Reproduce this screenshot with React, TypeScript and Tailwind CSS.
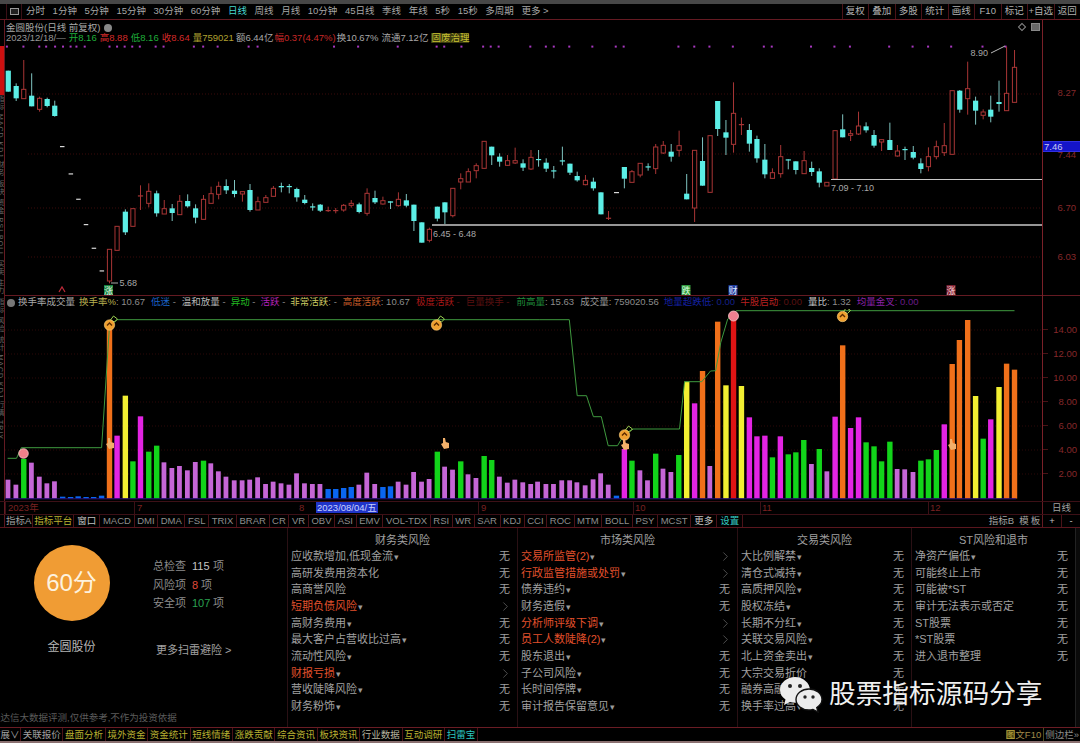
import React from "react";
import { ChevronRight } from "lucide-react";

const SX = 2.904;
type C = [number, number, number, number, number, "c" | "r"];
const candlesL: C[] = [
  [24,32,32,95,95,"c"],[47,70,78,115,123,"c"],[69,0,88,116,116,"r"],[92,40,107,139,139,"c"],[115,110,115,148,155,"r"],[137,113,117,138,142,"c"],[159,122,137,168,170,"c"],
  [318,568,568,663,670,"r"],[340,499,499,571,571,"r"],[364,448,455,517,525,"c"],[386,446,446,499,499,"r"],[408,376,406,408,450,"r"],[432,370,394,430,442,"r"],[455,392,400,460,470,"c"],[477,420,446,462,462,"r"],[500,432,445,459,483,"c"],[522,405,424,464,464,"r"],[545,403,423,439,443,"c"],[568,433,445,473,490,"c"],[591,405,418,478,478,"r"],[613,380,401,430,430,"r"],[635,365,379,403,418,"r"],[657,358,378,391,402,"c"],[681,360,392,402,412,"c"],[704,395,395,402,425,"r"],[726,372,390,450,455,"c"],[749,410,425,450,450,"r"],[772,405,413,427,427,"r"],[794,378,385,409,409,"r"],[817,368,378,382,397,"c"],[840,372,378,381,400,"c"],[862,383,387,412,425,"c"],[885,405,419,429,433,"c"],[908,430,439,441,452,"c"],[930,432,434,452,456,"c"],[953,440,450,452,456,"r"],[975,444,450,452,460,"r"],[998,432,436,450,455,"r"],[1020,420,430,436,443,"r"],[1043,428,433,456,460,"c"],[1066,385,400,460,467,"r"],[1089,392,414,427,432,"c"],[1112,410,422,432,434,"r"],[1134,424,424,428,447,"c"],[1157,397,418,437,440,"r"],[1180,402,421,437,442,"c"],[1202,434,434,483,513,"c"],[1225,487,487,548,548,"c"],[1247,503,508,541,547,"r"],[1270,440,440,476,484,"c"],[1292,427,427,457,492,"c"],[1315,385,385,467,472,"r"],[1338,340,356,366,388,"r"],[1360,325,335,366,366,"r"],[1383,310,317,332,355,"r"],[1406,244,244,325,325,"r"],[1428,260,260,286,315,"c"],[1451,280,290,305,320,"c"],[1474,285,302,316,318,"r"],[1496,263,302,309,312,"r"],[1519,298,310,323,333,"c"],[1542,270,292,327,330,"r"],[1564,270,297,299,320,"c"],
];
const candlesR: C[] = [
  [18,355,368,386,396,"c"],[40,378,391,393,415,"c"],[65,320,361,363,376,"c"],[87,371,371,398,405,"c"],[108,395,408,421,425,"c"],[132,405,421,434,436,"r"],[155,413,425,445,452,"c"],[177,457,457,523,523,"c"],[199,513,533,537,540,"r"],
  [245,381,381,416,445,"c"],[267,390,395,427,427,"r"],[291,370,370,405,412,"r"],[314,370,379,381,392,"c"],[336,312,321,386,402,"r"],[358,303,316,339,342,"r"],[381,312,335,350,365,"c"],[404,272,317,331,350,"r"],[426,402,461,478,478,"c"],[449,331,331,504,546,"r"],[472,292,363,437,437,"c"],[494,287,287,457,457,"r"],[516,183,183,267,288,"c"],[540,240,277,293,345,"c"],[562,127,220,313,338,"r"],[585,233,252,254,285,"r"],[608,252,270,311,335,"c"],[630,287,297,355,368,"c"],[653,312,359,403,415,"c"],[675,385,398,415,415,"r"],[699,315,350,401,413,"r"],[721,358,358,361,388,"c"],[743,364,364,390,403,"c"],[767,333,362,401,401,"r"],[789,365,384,396,408,"c"],[811,385,394,428,442,"c"],[833,427,427,438,438,"r"],[857,272,272,417,417,"r"],[879,223,268,292,292,"c"],[902,270,281,286,303,"r"],[925,215,258,282,285,"r"],[947,247,259,271,278,"c"],[970,270,285,317,323,"c"],[992,299,299,306,333,"r"],[1016,248,300,330,330,"c"],[1038,315,333,348,350,"r"],[1060,320,327,329,360,"c"],[1084,318,336,353,358,"c"],[1106,355,370,387,400,"c"],[1128,322,350,380,394,"r"],[1151,302,320,350,358,"r"],[1174,249,317,338,348,"r"],[1197,152,152,343,343,"r"],[1219,150,152,209,218,"c"],[1242,65,146,176,224,"r"],[1265,170,182,212,254,"c"],[1287,208,216,226,238,"r"],[1309,167,209,230,247,"c"],[1333,122,186,192,215,"c"],[1355,20,160,212,212,"r"],[1378,30,82,187,187,"r"],
];
const CY = "#5ceee6";
const RD = "#a83535";

function Candle({ c, ox, oy }: { c: C; ox: number; oy: number }) {
  const x = ox + c[0] / SX;
  const y = (v: number) => oy + v / 3;
  const col = c[5] === "c" ? CY : RD;
  const w = 5.2;
  const thin = c[3] - c[2] < 5;
  return (
    <g>
      <line x1={x} x2={x} y1={y(c[1])} y2={y(c[4])} stroke={c[5] === "c" ? "#7fc4c0" : RD} strokeWidth={1} />
      {c[5] === "c" ? (
        <rect x={x - w / 2} y={y(c[2])} width={w} height={Math.max(1.2, (c[3] - c[2]) / 3)} fill={col} />
      ) : thin ? (
        <rect x={x - w / 2} y={y(c[2])} width={w} height={1.2} fill={col} />
      ) : (
        <rect x={x - w / 2 + 0.5} y={y(c[2])} width={w - 1} height={(c[3] - c[2]) / 3} fill="#000" stroke={col} strokeWidth={1} />
      )}
    </g>
  );
}

const dotsL = [20,68,114,134,160,183,205,222,246,318,340,362,384,406,452,475,563,590,632,722,748,970,1040,1155,1268,1290,1340,1403,1425,1448,1540];
const dotsR = [17,40,85,152,220,243,402,448,492,560,650,673,787,855,900,1014,1082,1127,1194,1285,1352];
const dashes: [number, number][] = [[180,258],[205,340],[227,416],[249,492],[272,563],[295,631]];

const P = "#c566d6", G = "#12d41a", O = "#f0701a", Y = "#f2ef32", M = "#e324e3", B = "#0a66f0", R = "#e01414";
const barsL: [number, number, string][] = [
  [24,512,P],[47,527,P],[69,450,G],[92,461,P],[115,503,P],[137,523,P],[159,517,P],[182,563,B],[205,564,B],[227,562,B],[250,564,B],[272,564,B],[295,560,B],[318,50,O],[340,380,M],[364,260,Y],[386,457,G],[408,322,M],[432,428,G],[455,410,G],[477,460,P],[500,477,P],[522,471,P],[545,484,P],[568,459,P],[591,455,G],[613,463,P],[635,487,P],[657,503,P],[681,514,P],[704,514,P],[726,512,P],[749,505,P],[772,525,P],[794,518,P],[817,523,P],[840,527,P],[862,493,P],[885,523,P],[908,525,P],[930,525,P],[953,540,B],[975,540,B],[998,537,B],[1020,534,B],[1043,527,P],[1066,491,P],[1089,525,P],[1112,534,B],[1134,532,B],[1157,518,P],[1180,527,P],[1202,489,P],[1225,518,P],[1247,510,P],[1270,428,G],[1292,473,P],[1315,482,P],[1338,457,G],[1360,496,P],[1383,507,P],[1406,441,G],[1428,453,G],[1451,503,P],[1474,521,P],[1496,512,P],[1519,520,P],[1542,525,P],[1562,518,P],
];
const barsR: [number, number, string][] = [
  [18,525,P],[40,525,P],[64,514,P],[87,514,P],[108,520,P],[132,529,P],[155,511,P],[177,493,P],[199,527,P],[222,560,B],[245,420,M],[267,455,G],[291,484,P],[313,514,P],[336,434,G],[358,479,P],[381,489,P],[403,438,G],[426,218,Y],[449,283,M],[472,186,O],[494,471,P],[516,38,O],[540,229,Y],[562,30,R],[585,231,Y],[608,325,M],[630,382,M],[653,380,M],[675,445,G],[698,382,M],[721,436,G],[743,430,G],[766,393,G],[789,465,P],[811,420,G],[834,487,P],[857,323,M],[879,109,O],[902,357,M],[925,325,M],[947,400,G],[970,412,G],[992,457,G],[1016,398,G],[1038,480,P],[1060,481,P],[1084,489,P],[1106,455,G],[1128,451,G],[1151,423,G],[1174,346,M],[1197,165,O],[1218,93,O],[1242,33,O],[1265,261,Y],[1287,389,G],[1309,331,M],[1333,234,Y],[1355,164,O],[1378,182,O],
];
const lineL = [[22,448],[48,448],[62,416],[295,416],[318,50],[340,32],[1568,32]];
const lineR = [[0,32],[85,32],[108,260],[135,260],[155,323],[178,323],[198,410],[225,410],[245,375],[270,360],[405,360],[420,218],[470,218],[495,186],[510,185],[525,100],[545,30],[570,5],[1378,5]];
const volPts = [
  ...lineL.map(([x, y]) => `${(x / SX).toFixed(1)},${(310 + y / 3).toFixed(1)}`),
  ...lineR.map(([x, y]) => `${(540 + x / SX).toFixed(1)},${(310 + y / 3).toFixed(1)}`),
].join(" ");

function Smile({ x, y }: { x: number; y: number }) {
  return (
    <g>
      <path d={`M${x + 1} ${y - 5} L${x + 4} ${y - 9} L${x + 8} ${y - 6} L${x + 5} ${y - 3} Z`} fill="none" stroke="#9ccf50" strokeWidth={1} />
      <circle cx={x} cy={y} r={5.2} fill="#f0a030" stroke="#f8d080" strokeWidth={0.6} />
      <path d={`M${x - 2.5} ${y + 0.5} L${x} ${y - 2} L${x + 2.5} ${y + 0.5}`} fill="none" stroke="#5a2a00" strokeWidth={1.4} />
    </g>
  );
}
function Hand({ x, y }: { x: number; y: number }) {
  return (
    <path
      d={`M${x - 2} ${y - 6} L${x} ${y - 6} L${x + 0.8} ${y - 2} L${x + 4} ${y - 1} L${x + 4} ${y + 4} L${x - 1} ${y + 5} L${x - 4} ${y} L${x - 2} ${y - 1} Z`}
      fill="#f2b06a"
    />
  );
}

function PriceChart() {
  return (
    <svg viewBox="5 43 1037 253" width={1037} height={253} className="block">
      {[94, 154, 208, 257].map((y) => (
        <line key={y} x1={28} x2={1042} y1={y} y2={y} stroke="#3a0a0a" strokeDasharray="1 2" />
      ))}
      {dotsL.map((d) => <rect key={d} x={d / SX - 1} y={45.6} width={2} height={2} fill="#a838c0" />)}
      {dotsR.map((d) => <rect key={d} x={540 + d / SX - 1} y={45.6} width={2} height={2} fill="#a838c0" />)}
      {dashes.map(([x, y]) => <rect key={x} x={x / SX - 2} y={60 + y / 3} width={4.5} height={1.2} fill="#d8d8d8" />)}
      <rect x={614} y={192} width={5} height={1.2} fill="#d8d8d8" />
      {candlesL.map((c, i) => <Candle key={i} c={c} ox={0} oy={60} />)}
      {candlesR.map((c, i) => <Candle key={i} c={c} ox={540} oy={40} />)}
      <line x1={432} x2={1042} y1={225} y2={225} stroke="#c8c8c8" strokeWidth={1.4} />
      <line x1={831} x2={1042} y1={179.5} y2={179.5} stroke="#c8c8c8" strokeWidth={1} />
      <line x1={111} x2={118} y1={283} y2={283} stroke="#aaa" />
      <line x1={991} x2={1005} y1={53} y2={46} stroke="#bbb" />
      <g fill="#a8a8a8" fontSize={9}>
        <text x={119.5} y={286}>5.68</text>
        <text x={433} y={236.5}>6.45 - 6.48</text>
        <text x={831} y={190.5}>7.09 - 7.10</text>
        <text x={970.5} y={55.5}>8.90</text>
      </g>
      <path d="M59 292 L62 287 L65 292" fill="none" stroke="#c02a3a" strokeWidth={1.2} />
      <rect x={104} y={285} width={9} height={10} fill="#12803a" />
      <text x={104} y={294} fontSize={9} fill="#e8f8e8">涨</text>
      <rect x={681.5} y={285} width={9} height={10} fill="#2f9a3f" />
      <text x={681.5} y={294} fontSize={9} fill="#dfffdf">跌</text>
      <rect x={728.5} y={285} width={9} height={10} fill="#1f3a9a" />
      <text x={728.5} y={294} fontSize={9} fill="#e0e8ff">财</text>
      <rect x={946.5} y={285} width={9} height={10} fill="#7a2030" />
      <text x={946.5} y={294} fontSize={9} fill="#ffd8d8">涨</text>
    </svg>
  );
}

function VolumeChart() {
  return (
    <svg viewBox="5 310 1037 191" width={1037} height={191} className="block">
      {[331, 355, 379, 403, 427, 451, 475].map((y) => (
        <line key={y} x1={5} x2={1042} y1={y} y2={y} stroke="#2c0808" strokeDasharray="1 2" />
      ))}
      {barsL.map(([x, t, c]) => (
        <rect key={x} x={x / SX - 2.7} y={310 + t / 3} width={c === P ? 4.8 : 5.4} height={499.5 - (310 + t / 3)} fill={c} />
      ))}
      {barsR.map(([x, t, c]) => (
        <rect key={x} x={540 + x / SX - 2.7} y={310 + t / 3} width={c === P ? 4.8 : 5.4} height={499.5 - (310 + t / 3)} fill={c} />
      ))}
      <line x1={5} x2={1016} y1={499.8} y2={499.8} stroke="#2a1080" />
      <polyline points={volPts} fill="none" stroke="#3f9a3f" strokeWidth={1} />
      <Smile x={109.5} y={326} />
      <Smile x={436.5} y={326} />
      <Smile x={624.5} y={436} />
      <Smile x={842.5} y={317.5} />
      <circle cx={23.5} cy={454.5} r={4.8} fill="#f0808a" stroke="#f8c8c8" strokeWidth={0.8} />
      <circle cx={733.5} cy={317} r={5} fill="#f08090" stroke="#f8c8c8" strokeWidth={0.8} />
      <Hand x={110} y={445} />
      <Hand x={445} y={445} />
      <Hand x={625} y={446} />
      <Hand x={952} y={446} />
    </svg>
  );
}

const timeTabs = ["分时","1分钟","5分钟","15分钟","30分钟","60分钟","日线","周线","月线","10分钟","45日线","季线","年线","5秒","15秒","多周期","更多 >"];
const rightTabs = ["复权","叠加","多股","统计","画线","F10","标记","+自选","返回"];

function Toolbar() {
  return (
    <div className="h-[16px] shrink-0 flex items-center border-b border-[#641a22] text-[9.5px] text-[#a6a6a6]">
      <div className="w-[7px] h-full border-r border-[#3a1016]" />
      <div className="w-[15px] h-full border-r border-[#3a1016] flex items-center justify-center">
        <div className="w-[9px] h-[7px] border border-[#999] bg-[#222]" />
      </div>
      <div className="flex items-center gap-[7.6px] pl-[4px] flex-1 whitespace-nowrap">
        {timeTabs.map((t) => (
          <span key={t} className={t === "日线" ? "text-[#46d8d0]" : ""}>{t}</span>
        ))}
      </div>
      <div className="flex h-full">
        {rightTabs.map((t) => (
          <div key={t} className="w-[26.5px] flex items-center justify-center border-l border-[#4a1218] whitespace-nowrap text-[#b0b0b0]">{t}</div>
        ))}
      </div>
    </div>
  );
}

function PriceHeader() {
  return (
    <div className="h-[23px] shrink-0 text-[9.5px] text-[#a8a8a8] pl-[1px] whitespace-nowrap relative leading-none">
      <div className="flex items-center gap-[4px] h-[13px] pt-[2px]">
        <span>金圆股份(日线 前复权)</span>
        <span className="w-[8px] h-[8px] rounded-full bg-[#888] inline-block" />
      </div>
      <div className="flex items-center h-[10px] gap-[1px]">
        <span className="text-[#979797]">2023/12/18/—</span>
        <span className="text-[#1fae3a] ml-[2px]">开8.16</span>
        <span className="text-[#d42a2a] ml-[2px]">高8.88</span>
        <span className="text-[#1fae3a] ml-[2px]">低8.16</span>
        <span className="text-[#d42a2a] ml-[2px]">收8.64</span>
        <span className="text-[#b0a030] ml-[2px]">量759021</span>
        <span className="text-[#a8a8a8] ml-[1px]">额6.44亿</span>
        <span className="text-[#c82828]">幅0.37(4.47%)</span>
        <span className="text-[#a8a8a8]">换10.67%</span>
        <span className="text-[#a8a8a8] ml-[2px]">流通7.12亿</span>
        <span className="text-[#c8c030] bg-[#3a3a10] ml-[2px]">固废治理</span>
      </div>
      <div className="absolute right-[2px] top-[3px] flex items-center gap-[6px]">
        <span className="w-[6px] h-[6px] rotate-45 border border-[#888]" />
        <span className="w-[9px] h-[8px] border border-[#888] bg-[#666]" />
      </div>
    </div>
  );
}

const volLegend: { t: string; c: string; v?: string; g: string }[] = [
  { t: "换手率%", c: "#b8b050", v: ": 10.67", g: "ml-[4px]" },
  { t: "低迷", c: "#1a62c8", v: " -", g: "ml-[6px]" },
  { t: "温和放量", c: "#b8b8b8", v: " -", g: "ml-[6px]" },
  { t: "异动", c: "#22b822", v: " -", g: "ml-[5px]" },
  { t: "活跃", c: "#b020b8", v: " -", g: "ml-[5px]" },
  { t: "非常活跃", c: "#c8c860", v: ": -", g: "ml-[5px]" },
  { t: "高度活跃", c: "#c05a28", v: ": 10.67", g: "ml-[6px]" },
  { t: "极度活跃", c: "#a81818", v: " -", g: "ml-[6px]" },
  { t: "巨量换手", c: "#5a1010", v: " -", g: "ml-[6px]" },
  { t: "前高量", c: "#1f8a3a", v: ": 15.63", g: "ml-[7px]" },
  { t: "成交量", c: "#9a9a9a", v: ": 759020.56", g: "ml-[6px]" },
  { t: "地量超跌低", c: "#1420a0", v: ": 0.00", g: "ml-[5px]" },
  { t: "牛股启动", c: "#b82020", v: ": 0.00", g: "ml-[5px]" },
  { t: "量比", c: "#c8c8c8", v: ": 1.32", g: "ml-[6px]" },
  { t: "均量金叉", c: "#8a20a8", v: ": 0.00", g: "ml-[6px]" },
];

function VolumeHeader() {
  return (
    <div className="h-[13px] shrink-0 flex items-center text-[9.5px] whitespace-nowrap pl-[2px] overflow-hidden">
      <span className="w-[8px] h-[8px] rounded-full bg-[#777] mr-[3px] shrink-0" />
      <span className="text-[#a8a8a8]">换手率成交量</span>
      {volLegend.map((l) => (
        <span key={l.t} className={l.g}>
          <span style={{ color: l.c }}>{l.t}</span>
          <span className={l.t === "牛股启动" || l.t === "极度活跃" || l.t === "巨量换手" ? "text-[#5a1010]" : l.t === "均量金叉" ? "text-[#6a1a88]" : l.t === "地量超跌低" ? "text-[#14208a]" : "text-[#8c8c8c]"}>{l.v}</span>
        </span>
      ))}
    </div>
  );
}

function LeftStrip() {
  return (
    <div className="w-[5px] shrink-0 border-r border-[#641a22] flex flex-col overflow-hidden">
      <div className="h-[26px] shrink-0" />
      <div className="h-[49px] shrink-0 bg-[#cc1010]" />
      <div className="flex-1 overflow-hidden text-[7px] text-[#666] [writing-mode:vertical-rl] whitespace-nowrap leading-none -ml-[2px] tracking-[1px]">
        指标 MACD KDJ 财务 板块 资金 RSI BOLL 买卖 主力 指标 风险 统计 MACD KDJ 行情 TRIX
      </div>
    </div>
  );
}

function PriceAxis() {
  return (
    <div className="relative h-[276px] border-b border-[#641a22] text-[9.5px] text-[#85282a]">
      {[["8.27", 73], ["7.44", 135], ["6.70", 188], ["6.03", 237]].map(([t, y]) => (
        <span key={t} className="absolute right-[4px] leading-none" style={{ top: Number(y) - 5 }}>{t}</span>
      ))}
      <div className="absolute left-0 right-0 top-[121px] h-[11px] bg-[#1414c8] border-y border-[#3030e0] text-[#c8c8f0] leading-[9px] pl-[1px]">7.46</div>
    </div>
  );
}

function VolAxis() {
  return (
    <div className="relative flex-1 text-[9.5px] text-[#85282a]">
      {[["14.00", 331], ["12.00", 355], ["10.00", 379], ["8.00", 403], ["6.00", 427], ["4.00", 451], ["2.00", 475]].map(([t, y]) => (
        <div key={t} className="absolute left-0 right-[3px] flex items-center justify-between leading-none" style={{ top: Number(y) - 297 - 5 }}>
          <span className="w-[5px] h-px bg-[#4a1216]" />
          <span>{t}</span>
        </div>
      ))}
    </div>
  );
}

function DateRow() {
  const ticks: [string, string, string][] = [
    ["2023年", "w-[129px]", "text-[#7a2222]"],
    ["7", "w-[164px]", "text-[#7a2222]"],
  ];
  return (
    <div className="h-[14px] shrink-0 flex border-y border-[#3c1016] text-[9.5px] leading-[12px] whitespace-nowrap">
      <div className="w-[5px] shrink-0 border-r border-[#641a22]" />
      <div className="w-[1037px] flex shrink-0">
        {ticks.map(([t, w, c]) => (
          <div key={t} className={`${w} ${c} pl-[2px] border-l border-[#3c1016]`}>{t}</div>
        ))}
        <div className="w-[18px] text-[#7a2222] pl-[1px]">8</div>
        <div className="w-[162px]">
          <span className="bg-[#2034c8] text-[#c8d0ff] px-[1px]">2023/08/04/五</span>
        </div>
        <div className="w-[155px] text-[#7a2222] border-l border-[#3c1016] pl-[2px]">9</div>
        <div className="w-[127px] text-[#7a2222] border-l border-[#3c1016] pl-[1px]">10</div>
        <div className="w-[168px] text-[#7a2222] border-l border-[#3c1016] pl-[1px]">11</div>
        <div className="flex-1 text-[#7a2222] border-l border-[#3c1016] pl-[1px]">12</div>
      </div>
      <div className="flex-1 border-l border-[#641a22] text-center text-[#a0a0a0]">日线</div>
    </div>
  );
}

const idx = ["MACD","DMI","DMA","FSL","TRIX","BRAR","CR","VR","OBV","ASI","EMV","VOL-TDX","RSI","WR","SAR","KDJ","CCI","ROC","MTM","BOLL","PSY","MCST"];

function IndexBar() {
  return (
    <div className="h-[13px] shrink-0 flex items-stretch border-b border-[#5a161e] text-[9.5px] leading-[12px] whitespace-nowrap text-[#8e8e8e]">
      <div className="w-[5px] shrink-0 border-r border-[#5a161e]" />
      <div className="px-[1px] border-r border-[#4a1218] text-[#a0a0a0]">指标A</div>
      <div className="px-[1px] border-r border-[#4a1218] text-[#b8b030] w-[41px] text-center">指标平台</div>
      <div className="px-[3px] border-r border-[#4a1218] text-[#c0c0c0]">窗口</div>
      {idx.map((t) => (
        <div key={t} className="px-[2.6px] border-r border-[#4a1218]">{t}</div>
      ))}
      <div className="px-[3px] border-r border-[#4a1218] text-[#c0c0c0]">更多</div>
      <div className="px-[3px] border-r border-[#4a1218] text-[#34c8c0]">设置</div>
      <div className="flex-1" />
      <div className="w-[53px] text-[#a0a0a0] flex gap-[5px] justify-center">
        <span>指标B</span>
        <span className="tracking-[2px]">模板</span>
      </div>
      <div className="w-[19px] border-l border-[#641a22] text-center text-[#c0c0c0]">+</div>
      <div className="flex-1 max-w-[19px] border-l border-[#4a1218] text-center text-[#c0c0c0]">-</div>
    </div>
  );
}

type Row = { t: string; red?: boolean; arrow?: boolean; drop?: boolean };
const columns: { title: string; w: string; rows: Row[] }[] = [
  {
    title: "财务类风险",
    w: "w-[230px]",
    rows: [
      { t: "应收款增加,低现金流", drop: true },
      { t: "高研发费用资本化" },
      { t: "高商誉风险" },
      { t: "短期负债风险", drop: true, red: true, arrow: true },
      { t: "高财务费用", drop: true },
      { t: "最大客户占营收比过高", drop: true },
      { t: "流动性风险", drop: true },
      { t: "财报亏损", drop: true, red: true, arrow: true },
      { t: "营收陡降风险", drop: true },
      { t: "财务粉饰", drop: true },
    ],
  },
  {
    title: "市场类风险",
    w: "w-[220px]",
    rows: [
      { t: "交易所监管(2)", drop: true, red: true, arrow: true },
      { t: "行政监管措施或处罚", drop: true, red: true, arrow: true },
      { t: "债券违约", drop: true },
      { t: "财务造假", drop: true },
      { t: "分析师评级下调", drop: true, red: true, arrow: true },
      { t: "员工人数陡降(2)", drop: true, red: true, arrow: true },
      { t: "股东退出", drop: true },
      { t: "子公司风险", drop: true },
      { t: "长时间停牌", drop: true },
      { t: "审计报告保留意见", drop: true },
    ],
  },
  {
    title: "交易类风险",
    w: "w-[174px]",
    rows: [
      { t: "大比例解禁", drop: true },
      { t: "清仓式减持", drop: true },
      { t: "高质押风险", drop: true },
      { t: "股权冻结", drop: true },
      { t: "长期不分红", drop: true },
      { t: "关联交易风险", drop: true },
      { t: "北上资金卖出", drop: true },
      { t: "大宗交易折价" },
      { t: "融券高融资" },
      { t: "换手率过高", drop: true },
    ],
  },
  {
    title: "ST风险和退市",
    w: "w-[164px]",
    rows: [
      { t: "净资产偏低", drop: true },
      { t: "可能终止上市" },
      { t: "可能被*ST" },
      { t: "审计无法表示或否定" },
      { t: "ST股票" },
      { t: "*ST股票" },
      { t: "进入退市整理" },
    ],
  },
];

function RiskColumn({ c }: { c: (typeof columns)[number] }) {
  return (
    <div className={`${c.w} shrink-0 border-l border-[#2a1014] flex flex-col`}>
      <div className="h-[20px] shrink-0 flex items-center justify-center text-[11px] text-[#a0a0a0] pt-[4px]">{c.title}</div>
      {c.rows.map((r) => (
        <div key={r.t} className="h-[16.7px] shrink-0 flex items-center justify-between pl-[3px] pr-[7px] text-[11px] leading-none whitespace-nowrap">
          <span className={r.red ? "text-[#e2502c]" : "text-[#a0a0a0]"}>
            {r.t}
            {r.drop && <span className="text-[#9a9a9a] text-[9px] ml-[1px]">▾</span>}
          </span>
          {r.arrow ? (
            <ChevronRight size={15} strokeWidth={0.9} className="text-[#8a8a8a] -mr-[3px]" />
          ) : (
            <span className="text-[#a0a0a0]">无</span>
          )}
        </div>
      ))}
    </div>
  );
}

function ScorePanel() {
  return (
    <div className="w-[287px] shrink-0 flex flex-col">
      <div className="flex flex-1">
        <div className="w-[143px] flex flex-col items-center pt-[17px]">
          <div className="w-[76px] h-[76px] rounded-full bg-[#f09c34] flex items-center justify-center text-[24px] text-[#fdf2de]">60分</div>
          <div className="mt-[18px] text-[12px] leading-[16px] text-[#b4b4b4]">金圆股份</div>
        </div>
        <div className="pl-[10px] pt-[29px] text-[11px] text-[#8c8c8c]">
          <div className="flex h-[18.7px] items-center"><span className="w-[39px]">总检查</span><span className="text-[#c4c4c4] w-[21px]">115</span><span>项</span></div>
          <div className="flex h-[18.7px] items-center"><span className="w-[39px]">风险项</span><span className="text-[#e04a3a] w-[9px]">8</span><span>项</span></div>
          <div className="flex h-[18.7px] items-center"><span className="w-[39px]">安全项</span><span className="text-[#2aa050] w-[21px]">107</span><span>项</span></div>
          <div className="mt-[29px] ml-[3px] text-[#a0a0a0] whitespace-nowrap">更多扫雷避险 &gt;</div>
        </div>
      </div>
      <div className="h-[16px] shrink-0 text-[9.5px] text-[#5c5c5c] whitespace-nowrap overflow-hidden -ml-[9px]">通达信大数据评测,仅供参考,不作为投资依据</div>
    </div>
  );
}

function Watermark() {
  return (
    <div className="absolute left-[779px] top-[675px] flex items-center gap-[6px] pointer-events-none">
      <svg width="44" height="38" viewBox="0 0 44 38">
        <path d="M16 2c-8 0-15 5.600-15 13 0 4 2 7.200 5.500 9.500L5 30l6-3c1.600.5 3.200.8 5 .8 8 0 15-5.800 15-12.800S24 2 16 2z" fill="#ececec" />
        <circle cx="11" cy="11" r="2" fill="#222" />
        <circle cx="21" cy="11" r="2" fill="#222" />
        <path d="M30 14c-7 0-13 4.700-13 10.500S23 35 30 35c1.500 0 2.800-.2 4-.6l5 2.600-1.200-4.500C41 30.500 43 27.700 43 24.500 43 18.700 37 14 30 14z" fill="#ececec" stroke="#111" strokeWidth="1.4" />
        <circle cx="26" cy="22" r="1.7" fill="#222" />
        <circle cx="34" cy="22" r="1.7" fill="#222" />
      </svg>
      <span className="text-[26.7px] leading-none text-[#f0f0f0] whitespace-nowrap">股票指标源码分享</span>
    </div>
  );
}

const bottomTabs = [
  { t: "关联报价", c: "text-[#a0a0a0]" },
  { t: "盘面分析", c: "text-[#b8b030]" },
  { t: "境外资金", c: "text-[#b8b030]" },
  { t: "资金统计", c: "text-[#b8b030]" },
  { t: "短线情绪", c: "text-[#b8b030]" },
  { t: "涨跌贡献", c: "text-[#b8b030]" },
  { t: "综合资讯", c: "text-[#b8b030]" },
  { t: "板块资讯", c: "text-[#b8b030]" },
  { t: "行业数据", c: "text-[#b8b8a0]" },
  { t: "互动调研", c: "text-[#b8b030]" },
];

function BottomBar() {
  return (
    <div className="h-[14px] shrink-0 flex items-center border-t border-[#6a1c24] text-[9.5px] whitespace-nowrap leading-none">
      <div className="w-[21px] h-full border-r border-[#4a1218] overflow-hidden flex items-center text-[#a0a0a0] shrink-0">
        <span className="-ml-[9px]">扩展∨</span>
      </div>
      {bottomTabs.map((b) => (
        <div key={b.t} className={`w-[42.4px] h-full shrink-0 flex items-center justify-center border-r border-[#4a1218] ${b.c}`}>{b.t}</div>
      ))}
      <div className="w-[33px] h-full shrink-0 flex items-center justify-center border-r border-[#4a1218] text-[#2cc8c0]">扫雷宝</div>
      <div className="flex-1" />
      <div className="h-full flex items-center text-[#a08a4a] pr-[2px]">
        <span className="bg-[#4a4210] text-[#b8a840]">图</span>
        <span>文F10</span>
      </div>
      <div className="h-full flex items-center border-l border-[#4a4a20] pl-[1px] pr-[1px] text-[#8a8a8a]">侧边栏»</div>
    </div>
  );
}

export default function App() {
  return (
    <div className="relative w-[1080px] h-[743px] bg-black overflow-hidden flex flex-col font-['Liberation_Sans','Noto_Sans_CJK_SC',sans-serif]">
      <div className="h-[4px] shrink-0 bg-[#474747]" />
      <Toolbar />
      <div className="h-[481px] shrink-0 flex">
        <LeftStrip />
        <div className="w-[1037px] shrink-0 flex flex-col">
          <div className="h-[276px] shrink-0 border-b border-[#641a22] flex flex-col">
            <PriceHeader />
            <div className="h-[252px] overflow-hidden"><PriceChart /></div>
          </div>
          <VolumeHeader />
          <VolumeChart />
        </div>
        <div className="flex-1 border-l border-[#7a2028] flex flex-col">
          <PriceAxis />
          <VolAxis />
        </div>
      </div>
      <DateRow />
      <IndexBar />
      <div className="flex-1 flex min-h-0">
        <ScorePanel />
        {columns.map((c) => <RiskColumn key={c.title} c={c} />)}
        <div className="flex-1 border-l border-[#222] bg-[#0a0a0a]" />
      </div>
      <BottomBar />
      <div className="h-[2px] shrink-0 bg-[#8a7070]" />
      <Watermark />
    </div>
  );
}
